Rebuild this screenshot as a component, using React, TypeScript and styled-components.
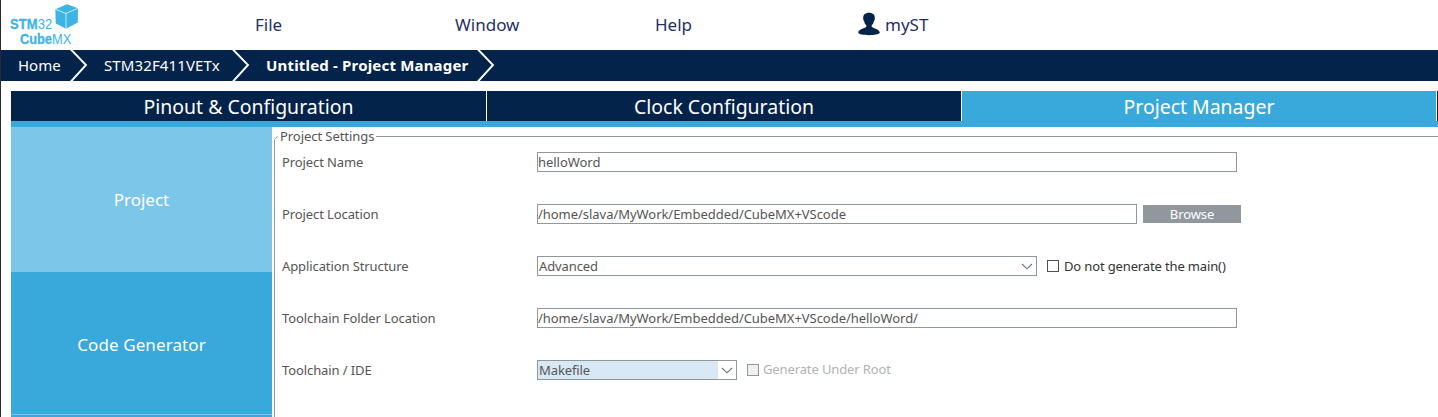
import React from "react";
import styled, { createGlobalStyle } from "styled-components";

const navy = "#03234b";
const blue = "#39a9dc";
const lightBlue = "#7cc6ea";
const grey = "#90989e";
const textGrey = "#555";

const GlobalStyle = createGlobalStyle`
  * { box-sizing: border-box; }
  body { margin: 0; background: #fff; overflow: hidden; font-family: "Noto Sans", sans-serif; }
  input, button { font: inherit; margin: 0; }
`;

const Window = styled.div`
  display: flex;
  flex-direction: column;
  width: 1438px;
  height: 417px;
  overflow: hidden;
  border-left: 1px solid #2a2a2c;
  background: #fff;
`;

const MenuBar = styled.header`
  display: flex;
  height: 50px;
  flex: none;
`;

const LogoSlot = styled.div`
  width: 254px;
`;

const MenuItem = styled.a<{ $width?: number }>`
  display: flex;
  align-items: center;
  width: ${(p) => (p.$width ? `${p.$width}px` : "auto")};
  height: 48px;
  color: #1f2f66;
  font-size: 17px;
  white-space: nowrap;
`;

const UserIcon = styled.svg`
  flex: none;
  margin: 0 5px 0 0;
`;

const Breadcrumbs = styled.nav`
  display: flex;
  flex: none;
  height: 31px;
  background: ${navy};
`;

const Crumb = styled.div<{ $width: number; $bold?: boolean; $spacing?: number }>`
  display: flex;
  justify-content: space-between;
  width: ${(p) => p.$width}px;
  padding-left: ${(p) => (p.$spacing ? 16 : 17)}px;
  color: #fff;
  font-size: 15px;
  font-weight: ${(p) => (p.$bold ? 700 : 400)};
  letter-spacing: ${(p) => p.$spacing ?? 0}px;
  line-height: 30px;
  white-space: nowrap;
`;

const Tabs = styled.div`
  display: flex;
  flex: none;
  height: 36px;
  margin: 10px 0 0 10px;
  border-bottom: 6px solid ${blue};
`;

const Tab = styled.div<{ $active?: boolean; $width: number }>`
  flex: none;
  width: ${(p) => p.$width}px;
  height: 30px;
  border-right: 1px solid #fff;
  background: ${(p) => (p.$active ? blue : navy)};
  color: #fff;
  font-size: 19.45px;
  line-height: 32px;
  text-align: center;
`;

const Content = styled.main`
  display: flex;
  flex: 1;
  min-height: 0;
  padding-left: 10px;
`;

const Sidebar = styled.aside`
  width: 261px;
  flex: none;
  background: ${blue};
`;

const SideItem = styled.div<{ $active?: boolean; $height: number }>`
  height: ${(p) => p.$height}px;
  border-bottom: 1px solid ${lightBlue};
  background: ${(p) => (p.$active ? lightBlue : blue)};
  color: #fff;
  font-size: 17px;
  letter-spacing: ${(p) => (p.$active ? 0 : 0.1)}px;
  line-height: 145px;
  text-align: center;
`;

const Settings = styled.fieldset`
  flex: none;
  width: 1180px;
  height: 310px;
  min-width: 0;
  margin: 0 0 0 2px;
  padding: 6px 0 0 7px;
  border: 1px solid ${grey};
  border-radius: 5px;
`;

const Legend = styled.legend`
  height: 19px;
  margin-left: -4px;
  padding: 0 2px 0 2px;
  color: ${textGrey};
  font-size: 13px;
  letter-spacing: -0.06px;
  line-height: 19px;
`;

const Row = styled.div`
  display: flex;
  align-items: center;
  height: 20px;
  margin-bottom: 32px;
  color: ${textGrey};
  font-size: 13px;
  letter-spacing: -0.04px;
`;

const Label = styled.label`
  flex: none;
  width: 255px;
  letter-spacing: -0.1px;
`;

const TextInput = styled.input<{ $width: number }>`
  width: ${(p) => p.$width}px;
  height: 20px;
  padding: 0;
  border: 1px solid ${grey};
  border-radius: 0;
  outline: none;
  background: #fff;
  color: ${textGrey};
  letter-spacing: -0.04px;
`;

const BrowseButton = styled.button`
  width: 98px;
  height: 18px;
  margin-left: 6px;
  padding: 0;
  border: 0;
  background: ${grey};
  color: #fff;
  letter-spacing: -0.1px;
  line-height: 18px;
`;

const Select = styled.div<{ $width: number }>`
  display: flex;
  width: ${(p) => p.$width}px;
  height: 20px;
  border: 1px solid ${grey};
`;

const SelectValue = styled.span<{ $highlight?: boolean }>`
  flex: 1;
  padding-left: 1px;
  background: ${(p) => (p.$highlight ? "#d9e8f5" : "#fff")};
  letter-spacing: -0.1px;
  line-height: 18px;
`;

const SelectArrow = styled.svg`
  flex: none;
`;

const CheckLabel = styled.label<{ $disabled?: boolean }>`
  display: flex;
  align-items: center;
  gap: ${(p) => (p.$disabled ? 4 : 5)}px;
  margin-left: 10px;
  color: ${(p) => (p.$disabled ? "#b0b2b4" : "#333")};
  letter-spacing: ${(p) => (p.$disabled ? -0.12 : -0.14)}px;
`;

const CheckText = styled.span<{ $raised?: boolean }>`
  padding-bottom: ${(p) => (p.$raised ? 2 : 0)}px;
`;

const Box = styled.span<{ $disabled?: boolean }>`
  width: 12px;
  height: 12px;
  border: 1px solid ${(p) => (p.$disabled ? grey : "#505050")};
  background: ${(p) => (p.$disabled ? "#f0f0f1" : "#fff")};
`;

const Logo = () => (
  <svg width="90" height="50" viewBox="1 0 90 50">
    <g fill="#3cb4e6" fontFamily="'Liberation Sans', sans-serif" fontSize="14.8">
      <text transform="translate(10 29.2) scale(.82 1)" fontWeight="700" textLength="33.5" lengthAdjust="spacingAndGlyphs" stroke="#3cb4e6" strokeWidth=".25">STM</text>
      <text transform="translate(37.8 29.2) scale(.82 1)" textLength="17.5" lengthAdjust="spacingAndGlyphs">32</text>
      <text transform="translate(20 43.7) scale(.82 1)" fontWeight="700" textLength="39" lengthAdjust="spacingAndGlyphs" stroke="#3cb4e6" strokeWidth=".25">Cube</text>
      <text transform="translate(52 43.7) scale(.82 1)" textLength="23.5" lengthAdjust="spacingAndGlyphs">MX</text>
      <path d="M55.3 9.3 67 4.2 78 8.2 77.8 22.5 66 28.7 55.8 23.5Z" />
    </g>
    <path d="M55.5 9.3 66 13.5 78 8.2M66 13.5V28.7" fill="none" stroke="#fff" strokeWidth="0.7" />
  </svg>
);

const Chevron = () => (
  <svg width="18" height="31" viewBox="0 0 18 31">
    <path d="M1 -.5 16 15 1 31.5" fill="none" stroke="#fff" strokeWidth="1.9" />
  </svg>
);

const Arrow = () => (
  <SelectArrow width="18" height="18" viewBox="0 0 18 18">
    <path d="M4 7 9 11.8 14 7" fill="none" stroke="#6c7176" strokeWidth="1.1" />
  </SelectArrow>
);

export default function App() {
  return (
    <>
      <GlobalStyle />
      <Window>
        <MenuBar>
          <LogoSlot><Logo /></LogoSlot>
          <MenuItem $width={200}>File</MenuItem>
          <MenuItem $width={200}>Window</MenuItem>
          <MenuItem $width={203}>Help</MenuItem>
          <MenuItem>
            <UserIcon width="22" height="24" viewBox="0 0 22 24">
              <path
                d="M11 .7C7 .7 4.9 2.9 5.2 6.4 5 7.6 5.7 8.6 6.1 9 6.5 11.2 7.2 12.4 8.3 13.3V14.7C7.6 16.6.8 16.2.2 20.8 1.4 24 20.4 24 21.8 20.8 21.2 16.2 14.4 16.6 13.7 14.7V13.3C14.8 12.4 15.5 11.2 15.9 9 16.3 8.6 17 7.6 16.8 6.4 17.1 2.9 15 .7 11 .7Z"
                fill={navy}
              />
            </UserIcon>
            myST
          </MenuItem>
        </MenuBar>
        <Breadcrumbs>
          <Crumb $width={87}>Home<Chevron /></Crumb>
          <Crumb $width={162} $spacing={0.12}>STM32F411VETx<Chevron /></Crumb>
          <Crumb $width={245} $bold $spacing={0.18}>Untitled - Project Manager<Chevron /></Crumb>
        </Breadcrumbs>
        <Tabs>
          <Tab $width={476}>Pinout &amp; Configuration</Tab>
          <Tab $width={475}>Clock Configuration</Tab>
          <Tab $width={475} $active>Project Manager</Tab>
          <Tab $width={475} />
        </Tabs>
        <Content>
          <Sidebar>
            <SideItem $height={145} $active>Project</SideItem>
            <SideItem $height={143}>Code Generator</SideItem>
          </Sidebar>
          <Settings>
            <Legend>Project Settings</Legend>
            <Row>
              <Label>Project Name</Label>
              <TextInput $width={700} defaultValue="helloWord" />
            </Row>
            <Row>
              <Label>Project Location</Label>
              <TextInput $width={600} defaultValue="/home/slava/MyWork/Embedded/CubeMX+VScode" />
              <BrowseButton>Browse</BrowseButton>
            </Row>
            <Row>
              <Label>Application Structure</Label>
              <Select $width={500}><SelectValue>Advanced</SelectValue><Arrow /></Select>
              <CheckLabel><Box /><CheckText>Do not generate the main()</CheckText></CheckLabel>
            </Row>
            <Row>
              <Label>Toolchain Folder Location</Label>
              <TextInput $width={700} defaultValue="/home/slava/MyWork/Embedded/CubeMX+VScode/helloWord/" />
            </Row>
            <Row>
              <Label>Toolchain / IDE</Label>
              <Select $width={200}><SelectValue $highlight>Makefile</SelectValue><Arrow /></Select>
              <CheckLabel $disabled><Box $disabled /><CheckText $raised>Generate Under Root</CheckText></CheckLabel>
            </Row>
          </Settings>
        </Content>
      </Window>
    </>
  );
}
